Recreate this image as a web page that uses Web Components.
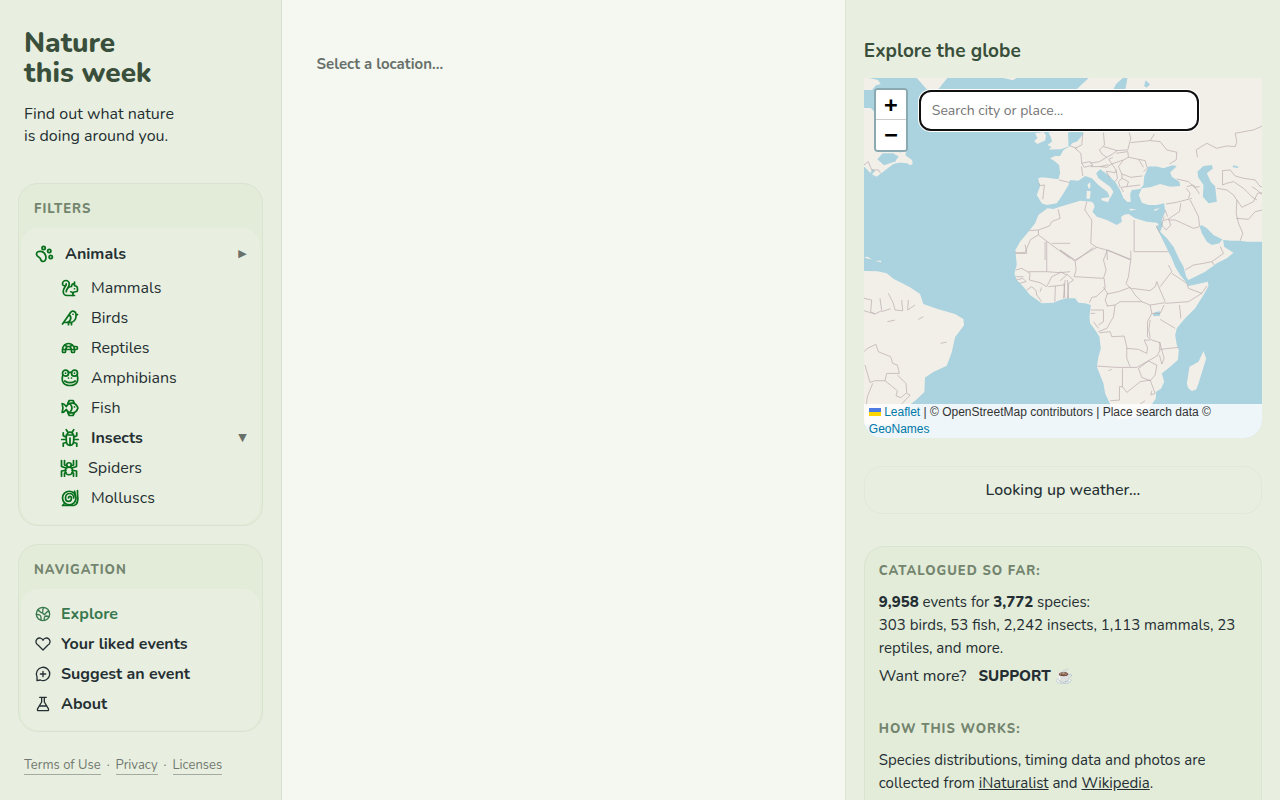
<!DOCTYPE html>
<html lang="en">
<head>
<meta charset="utf-8">
<meta name="viewport" content="width=device-width, initial-scale=1">
<title>Nature this week</title>
<style>
html, body { margin: 0; }
body {
  --ink: #252f33; --muted: #74856f; --line: #d8e3d0; --panel: #e8efe0; --card: #e3ecd9; --icon: #08701c;
  font: 16px/22px Nunito, Lato, "Open Sans", sans-serif; color: var(--ink); background: #f4f8f1;
}
</style>
</head>
<body>
<nature-app></nature-app>
<script>
const define = (name, html, setup) => customElements.define(name, class extends HTMLElement {
  constructor() {
    super();
    this.attachShadow({ mode: "open" }).innerHTML = html;
  }
  connectedCallback() { if (setup) setup(this, this.shadowRoot); }
});

const icons = {
  paw: '<path d="M2 12c0-3 3-4 6-3.500 3 .5 5 2 6 5 1.500 4 0 8.500-3 8.500-2.500 0-3.500-2-4-4-1-2.500-5-2-5-6Z"/><circle cx="11.500" cy="4" r="2.200"/><circle cx="19" cy="8" r="2.200"/><circle cx="21" cy="16" r="2.200"/>',
  squirrel: '<path d="M15.236 22a3 3 0 0 0-2.200-5M16 20a3 3 0 0 1 3-3h1a2 2 0 0 0 2-2v-2a4 4 0 0 0-4-4V4M18 13h.01M18 6a4 4 0 0 0-4 4 7 7 0 0 0-7 7c0-5 4-5 4-10.500a4.500 4.500 0 1 0-9 0 2.500 2.500 0 0 0 5 0C7 10 3 11 3 17c0 2.800 2.200 5 5 5h10"/>',
  bird: '<path d="M16 7h.01M3.400 18H12a8 8 0 0 0 8-8V7a4 4 0 0 0-7.280-2.300L2 20M20 7l2 .5-2 .5M10 18v3M14 17.750V21M7 18a6 6 0 0 0 3.840-10.610"/>',
  turtle: '<path d="m12 10 2 4v3a1 1 0 0 0 1 1h2a1 1 0 0 0 1-1v-3a8 8 0 1 0-16 0v3a1 1 0 0 0 1 1h2a1 1 0 0 0 1-1v-3l2-4h4ZM4.820 7.900 8 10M15.180 7.900 12 10M16.930 10H20a2 2 0 0 1 0 4H2"/>',
  frog: '<path d="M10 4.500h4M2.500 8C0 16 3 22 12 22s12-6 9.500-14M5 16c4 3 10 3 14 0M10 12h.01M14 12h.01"/><circle cx="6" cy="5.500" r="4"/><circle cx="18" cy="5.500" r="4"/><path d="M6 5.500h.01M18 5.500h.01"/>',
  fish: '<path d="M1.500 6c3 0 4 2 5.500 4 3-6 13-7 15.500 2-2.500 9-12.500 8-15.500 2-1.500 2-2.500 4-5.500 4 1.500-4 1.500-8 0-12ZM9 6l2-4h5l2 4M9 18l2 4h5l2-4M12.500 7c2.500 3 2.500 7 0 10M18 10.500h.01"/>',
  bug: '<path d="M7 8h10v7c0 9-10 9-10 0ZM12 12v8M8 8c0-5 8-5 8 0M9 4 7 1M15 4l2-3M7 11 3 9V5M17 11l4-2V5M7 14H1M17 14h6M7 18l-4 1v4M17 18l4 1v4"/>',
  spider: '<circle cx="12" cy="16" r="5"/><circle cx="12" cy="8" r="3"/><path d="M9 9 6 8V2M15 9l3-1V2M8 12 2 10V2M16 12l6-2V2M8 15l-6 1v7M16 15l6 1v7M8 18l-2 1v4M16 18l2 1v4"/>',
  snail: '<path d="M2 22h15c6-1 6-9 5-16V2M18 3c1 2 1 4 1 7M2 22l3-3"/><circle cx="11" cy="12" r="9"/><path d="M17 12c0-8-11-8-11 0 0 6 8 6 8 0 0-3-4-3-4 0"/>',
  globe: '<circle cx="12" cy="12" r="10"/><path d="M4 6c3 1 4 5 7 4 2-1-1-5 2-7M11 10l3 3 5-5 2 1M2 13c4-1 7 1 7 4v4M14 21c-1-4 1-6 3-6l4 1"/>',
  heart: '<path d="M19.500 13.500 12 21l-7.500-7.500A5.500 5.500 0 1 1 12 6.500a5.500 5.500 0 1 1 7.500 7Z"/>',
  chat: '<path d="M3 22v-6A10 10 0 1 1 8 21ZM8 12h8M12 8v8"/>',
  flask: '<path d="M7 2h10M10 2v7L4 19c-1 2 0 3 1 3h14c1 0 2-1 1-3L14 9V2M7 15h10"/>'
};

define("line-icon", `
<style>
:host { display: block; width: 18px; height: 18px; flex: none; }
svg { display: block; width: 100%; height: 100%; fill: none; stroke: currentColor; stroke-width: var(--stroke, 2); stroke-linecap: round; stroke-linejoin: round; overflow: visible; }
</style><svg viewBox="0 0 24 24" aria-hidden="true"></svg>`,
(el, root) => { root.querySelector("svg").innerHTML = icons[el.getAttribute("name")]; });

define("side-card", `
<style>
:host { display: block; border: 1px solid var(--line); border-radius: 20px; background: var(--card); }
h2 { margin: 0; padding: 14px 15px 8px; font-size: 13px; line-height: 22px; letter-spacing: 1px; font-weight: 800; text-transform: uppercase; color: var(--muted); }
div { background: var(--panel); border-radius: 18px; padding: 10px 13px 11px 14px; margin: 0 2px 1px; }
</style><h2></h2><div><slot></slot></div>`,
(el, root) => { root.querySelector("h2").textContent = el.getAttribute("heading"); });

define("filter-item", `
<style>
:host { display: block; }
button { all: unset; box-sizing: border-box; display: flex; align-items: center; gap: 12px; width: 100%; height: 30px; padding-left: 26px; cursor: pointer; font-weight: 400; }
line-icon { color: var(--icon); --stroke: 2.300; }
:host([strong]) button { font-weight: 700; }
:host([top]) button { padding-left: 0; height: 35px; padding-bottom: 3px; }
:host([tight]) button { gap: 10px; padding-left: 25px; }
i { margin-left: auto; font: 11px/16px "DejaVu Sans", sans-serif; color: #69706a; }
i:empty { display: none; }
</style>
<button type="button"><line-icon></line-icon><span><slot></slot></span><i></i></button>`,
(el, root) => {
  root.querySelector("line-icon").replaceWith(Object.assign(document.createElement("template"), { innerHTML: `<line-icon name="${el.getAttribute("icon")}"></line-icon>` }).content);
  root.querySelector("i").textContent = el.getAttribute("mark") || "";
});

define("nav-item", `
<style>
:host { display: block; }
a { display: flex; align-items: center; gap: 10px; height: 30px; font-weight: 700; color: var(--ink); text-decoration: none; }
span { display: flex; width: 16px; }
line-icon { width: 16px; height: 16px; }
:host([current]) a { color: #39784e; }
</style>
<a href="#"><span></span><slot></slot></a>`,
(el, root) => { root.querySelector("span").innerHTML = `<line-icon name="${el.getAttribute("icon")}"></line-icon>`; });

define("app-sidebar", `
<style>
:host { display: block; box-sizing: border-box; padding: 28px 18px 20px; border-right: 1px solid #d6e1d2; background: var(--panel); }
header { padding: 0 6px; }
h1 { margin: 0 0 15px; font-size: 28px; line-height: 30px; font-weight: 800; color: #3a4f3b; }
p { margin: 0 0 36px; }
side-card { margin-bottom: 18px; }
footer { display: flex; gap: 6px; padding: 6px 6px 0; font-size: 13px; line-height: 18px; color: #71786f; }
footer a { color: inherit; text-decoration: none; border-bottom: 1px solid #a3aaa0; }
</style>
<header><h1>Nature<br>this week</h1><p>Find out what nature<br>is doing around you.</p></header>
<side-card heading="Filters">
  <filter-item icon="paw" mark="▶" top strong>Animals</filter-item>
  <filter-item icon="squirrel">Mammals</filter-item>
  <filter-item icon="bird">Birds</filter-item>
  <filter-item icon="turtle">Reptiles</filter-item>
  <filter-item icon="frog">Amphibians</filter-item>
  <filter-item icon="fish">Fish</filter-item>
  <filter-item icon="bug" mark="▼" strong>Insects</filter-item>
  <filter-item icon="spider" tight>Spiders</filter-item>
  <filter-item icon="snail">Molluscs</filter-item>
</side-card>
<side-card heading="Navigation">
  <nav-item icon="globe" current>Explore</nav-item>
  <nav-item icon="heart">Your liked events</nav-item>
  <nav-item icon="chat">Suggest an event</nav-item>
  <nav-item icon="flask">About</nav-item>
</side-card>
<footer><a href="#">Terms of Use</a><span>·</span><a href="#">Privacy</a><span>·</span><a href="#">Licenses</a></footer>`);

define("world-map", `
<style>
:host { display: block; position: relative; height: 360px; border-radius: 0 0 18px 18px; overflow: hidden; background: #aad3df; }
.world { display: block; width: 100%; height: 100%; }
.land { fill: #f2efe9; }
.sea { fill: #aad3df; }
.border { fill: none; stroke: #b7a7aa; stroke-width: 2; stroke-linejoin: round; }
.zoom { position: absolute; left: 10px; top: 10px; width: 30px; border: 2px solid #8ba9b1; border-radius: 4px; background: #fff; overflow: hidden; }
.zoom button { display: flex; align-items: center; justify-content: center; width: 30px; height: 30px; margin: 0; padding: 0; border: 0; background: #fff; color: #000; font: bold 22px/30px "Lucida Console", Monaco, monospace; }
.zoom button:first-child { border-bottom: 1px solid #ccc; }
input { position: absolute; left: 55px; top: 12px; box-sizing: border-box; width: 280px; max-width: calc(100% - 70px); height: 41px; padding: 0 11px; border: 2px solid #101010; border-radius: 12px; box-shadow: 0 0 0 1px #fff; background: #fff; font: inherit; font-size: 14px; color: var(--ink); outline: none; }
input::placeholder { color: #757575; opacity: 1; }
footer { position: absolute; left: 0; right: 0; bottom: 0; padding: 0 5px; background: rgba(255,255,255,.8); font: 12px/17px "Liberation Sans", Arial, sans-serif; color: #333; }
footer a { color: #0078a8; text-decoration: none; }
.flag { width: 12px; height: 8px; }
</style>
<svg class="world" viewBox="0 0 1194 1080" preserveAspectRatio="xMidYMid slice" role="img" aria-label="World map">
  <g class="land">
    <path d="M550 391L568 393 588 386 618 377 648 368 683 371 690 379 691 388 685 401 698 416 728 426 758 441 773 431 771 417 780 410 793 408 813 421 848 431 878 434 884 439 876 446 886 466 903 500 912 520 923 541 933 566 948 591 966 613 973 624 998 619 1031 611 1033 624 1018 651 993 691 963 721 938 751 933 771 938 801 944 816 941 846 918 866 893 886 900 911 891 931 876 941 875 961 858 986 828 1012 790 1022 763 1024 746 1006 738 978 723 946 718 916 698 866 703 836 710 811 706 776 693 756 678 736 676 716 680 681 663 676 643 674 633 661 608 661 588 666 568 674 533 676 498 651 478 626 458 606 451 586 458 561 454 516 468 491 493 461 513 436 523 411 543 396Z"/>
    <path d="M522 301L534 298 560 301 583 304 588 286 585 261 572 250 558 241 573 234 588 234 598 216 618 204 628 191 648 181 658 166 640 120 640 32 674 0H1194V491L1148 491 1128 488 1103 488 1078 486 1048 471 1028 451 1014 442 1006 444 1013 466 1028 491 1043 501 1066 496 1076 482 1080 506 1103 521 1108 524 1088 541 1058 556 1023 581 973 606 966 596 958 566 945 543 928 506 908 481 888 461 896 441 893 426 903 401 900 376 878 381 853 381 833 374 824 351 833 331 858 328 888 318 918 326 948 324 946 311 923 296 918 284 938 264 925 262 898 271 878 266 853 266 840 296 838 321 828 333 803 336 798 348 800 371 790 372 778 361 768 336 753 311 728 288 708 274 696 286 703 301 738 326 748 341 738 361 730 342 703 321 683 301 663 294 643 308 618 306 613 322 593 354 578 376 548 381 533 376 518 351 528 325Z"/>
    <path d="M0 579L40 580 68 586 88 602 138 628 168 648 178 678 218 692 273 708 298 723 300 742 273 778 263 823 248 863 208 882 183 898 181 942 156 966 130 985 100 1020 80 1040H0Z"/>
    <path d="M1018 819L1026 841 1003 916 996 934 983 939 972 930 968 917 976 866 1003 851ZM553 164L613 158 613 206 590 214 554 215 562 207 550 201 564 191 559 175ZM513 166L538 162 546 172 543 188 520 198 510 190 520 180ZM158 0H250L226 30 208 50 186 32ZM416 0H458L446 7 432 3Z"/>
    <path d="M0 90L20 90 38 108 48 180 68 218 92 220 110 224 114 240 126 250 88 258 38 296 24 290 0 266ZM92 248L108 224 128 214 124 232 144 246 146 258 138 262 130 256 92 252ZM0 36L24 36 36 22 50 18 42 6 14 0H0ZM670 320L678 312 679 328 674 333ZM668 338L680 340 677 362 667 362ZM712 361L738 357 732 373 712 367ZM796 392L818 394 798 398ZM868 395L888 389 874 399ZM38 548H52L51 553 37 550ZM0 538L10 536 24 544 12 542Z"/>
  </g>
  <g class="sea">
    <path d="M1000 281L1018 264 1043 261 1046 272 1028 286 1040 312 1053 325 1058 371 1033 376 1016 356 1018 321 1002 298ZM748 33L756 18 776 0H790L784 33ZM844 7L840 25 848 29 858 19ZM1106 262L1122 266 1122 270 1106 268ZM868 715L888 713 887 700 874 702 866 708ZM0 46H26L28 88 8 80 0 64ZM90 228L104 236 92 252 76 236ZM40 244L56 226 90 226 96 250 60 262ZM18 290L24 274 34 278 24 290ZM612 166L658 163 640 190 624 196 614 188Z"/>
  </g>
  <g class="border">
    <g transform="translate(-12 -24)">
      <path d="M536 340L540 347 553 345 548 388M597 330L630 338M594 418L600 445 575 455 568 468 535 480V495L602 545 630 565M535 495L512 508 508 516 495 548H465M555 570V515M575 520H630M12 285L25 275 35 300 55 300 62 310M535 480L508 482"/>
    </g>
    <g transform="translate(588 -24)">
      <path d="M68 190L65 225 45 235 62 250 65 280M30 228L50 235M130 188L133 225 118 240 125 252 140 262 158 252 170 242 145 234 130 230M207 187L212 205 203 240 168 242M212 218L270 212 283 192M270 212L300 215 320 240 350 247 348 270 328 282M168 250L203 245 205 262 190 270 155 282 146 268 158 262M90 280L118 275 140 262M92 290L120 290 145 284M65 280L90 275 98 286 72 292ZM64 290L68 318M190 270L175 290 185 312 212 322 247 318M205 262L235 268 255 272 262 295 250 305M235 268L250 292M120 290L140 292 155 282 168 300 165 308 138 304 150 324M168 300L172 325 165 335M185 312L186 325 175 335 180 352M186 325L205 335 200 350 183 352 190 366M200 350L240 345"/>
      <path d="M412 262L408 240 440 220 470 235 500 228 525 230 530 215 525 190 580 180 607 168M487 345V302L510 300 525 318 550 325 585 330 600 350 607 350M487 345L500 340 520 335 550 355 575 380 590 390M470 355L500 360 520 375 530 390 528 430 535 460 548 490 540 512M530 390L545 412 580 395 592 370 607 368M528 445L565 448 585 425 607 420M350 327L385 335 402 352 418 350M380 350L400 345 418 372M378 355L390 370 385 385M395 385L350 397 318 402M362 400L358 425 325 447M390 390L400 410 415 440 418 468M325 450L345 450 400 475 418 470M312 440L304 465 318 480 332 465 325 447 310 452M288 468L300 490M222 450V545H325M80 395L74 420 95 450 92 520 110 532 140 540 212 570M110 532L45 570 0 540M140 540L142 570M575 350L590 360 607 375M315 420L322 440"/>
    </g>
    <g transform="translate(-12 516)">
      <path d="M467 10H500L495 -16M560 -25V65H505M467 60L485 55 510 70 508 90 540 98 560 110M468 80H490M468 90L488 85 498 95 478 100M500 120L515 110 528 122 530 135M530 135L545 155M540 125L545 112M560 110L575 80 600 68 630 65M565 110L612 105M584 155L586 108M612 100L614 145M622 90L625 145M560 65L600 68"/>
      <path d="M12 145L35 150 32 185 45 192 65 182 60 145M45 192L12 182M85 130L100 160 105 180 128 182 125 150M145 150L143 180 165 165M65 185L92 176M12 305L22 295 48 283 55 305 92 320 98 340 112 345 118 370 80 370 75 392 45 392 30 397 15 345M75 392L112 422 108 437 122 443 140 428 138 400 112 375M140 430L150 435 125 462M38 400L22 440 18 470M82 215L105 210M242 280L260 276M175 208L190 200"/>
    </g>
    <g transform="translate(588 516)">
      <path d="M0 0L45 34 48 60 42 80 130 85 138 60 130 30 142 0M45 34L100 -8M142 0L212 28 205 80 198 100 213 118M212 2V28M0 65L20 75 0 92M20 72L40 90 26 100 22 145M15 90L10 145M132 85L135 115 108 140 95 142 88 158M130 112L142 130 135 150 142 168M140 132L175 125 210 112 225 135 245 155M140 168L165 165 180 155 245 155 270 165 315 158M165 165L160 200 140 235 115 245M92 180H130V215L115 225M92 190H105M100 215L115 235M215 115L270 122 285 110 290 95 300 120 315 155M300 110L335 65 325 45M335 70L380 100 385 115 425 130 385 155 315 160M440 108L425 130M358 165L362 205M300 208L345 235M270 165L275 190 300 190 312 165M275 190L262 215 262 260 275 270 300 278 298 300M270 210L266 240 270 262M300 298L355 292M118 248L150 245 155 260 192 258 200 290V325L210 350M110 348L170 352 230 352M200 295L235 298 260 310 262 292 252 270 270 270M230 352L260 335 290 318 300 300M298 276L312 325 305 342 298 315M235 355L265 333 290 345 285 375 270 392 245 382ZM187 355V410L178 410V450L150 452M187 410L200 427 240 395 270 390 285 430 272 435 275 422M145 362L155 358M240 462L255 452M375 60L400 45 430 40 455 35 462 45M455 35L490 10 480 -10"/>
    </g>
  </g>
</svg>
<div class="zoom"><button type="button" aria-label="Zoom in">+</button><button type="button" aria-label="Zoom out">−</button></div>
<input type="text" placeholder="Search city or place..." aria-label="Search city or place">
<footer><svg class="flag" viewBox="0 0 12 8" aria-hidden="true"><path fill="#4c7be1" d="M0 0h12v4H0z"/><path fill="#ffd500" d="M0 4h12v4H0z"/></svg> <a href="#">Leaflet</a> | © OpenStreetMap contributors | Place search data © <a href="#">GeoNames</a></footer>`);

define("info-card", `
<style>
:host { display: block; border: 1px solid var(--line); border-radius: 20px; background: var(--card); padding: 13px 14px 40px; font-size: 15px; line-height: 23px; }
h3 { margin: 0 0 9px; font-size: 13px; line-height: 22px; letter-spacing: 1px; font-weight: 800; text-transform: uppercase; color: var(--muted); }
p { margin: 0 0 5px; }
.more { display: flex; gap: 12px; font-size: 16px; margin-bottom: 30px; }
a { color: inherit; }
b { font-weight: 800; }
.support { font-weight: 800; font-size: 15px; text-decoration: none; }
</style>
<h3>Catalogued so far:</h3>
<p><b>9,958</b> events for <b>3,772</b> species:<br>303 birds, 53 fish, 2,242 insects, 1,113 mammals, 23 reptiles, and more.</p>
<p class="more"><span>Want more?</span><a class="support" href="#">SUPPORT ☕</a></p>
<h3>How this works:</h3>
<p>Species distributions, timing data and photos are<br>collected from <a href="#">iNaturalist</a> and <a href="#">Wikipedia</a>.</p>`);

define("explore-panel", `
<style>
:host { display: block; box-sizing: border-box; padding: 39px 18px 20px; border-left: 1px solid #dce5d2; background: var(--panel); }
h2 { margin: 0 0 15px; font-size: 19px; line-height: 24px; font-weight: 700; color: #3a4f3b; }
.weather { margin: 28px 0 32px; padding: 12px; border: 1px solid #dfe9da; border-radius: 18px; text-align: center; font-weight: 500; }
</style>
<h2>Explore the globe</h2>
<world-map></world-map>
<div class="weather">Looking up weather...</div>
<info-card></info-card>`);

define("nature-app", `
<style>
:host { display: grid; grid-template-columns: minmax(0, 22fr) minmax(0, 44fr) minmax(0, 34fr); height: 100vh; }
app-sidebar, explore-panel { overflow-y: auto; scrollbar-width: none; }
main { padding: 53px 35px; font-size: 15px; font-weight: 700; color: #68706a; }
</style>
<app-sidebar></app-sidebar>
<main>Select a location...</main>
<explore-panel></explore-panel>`);
</script>
</body>
</html>
